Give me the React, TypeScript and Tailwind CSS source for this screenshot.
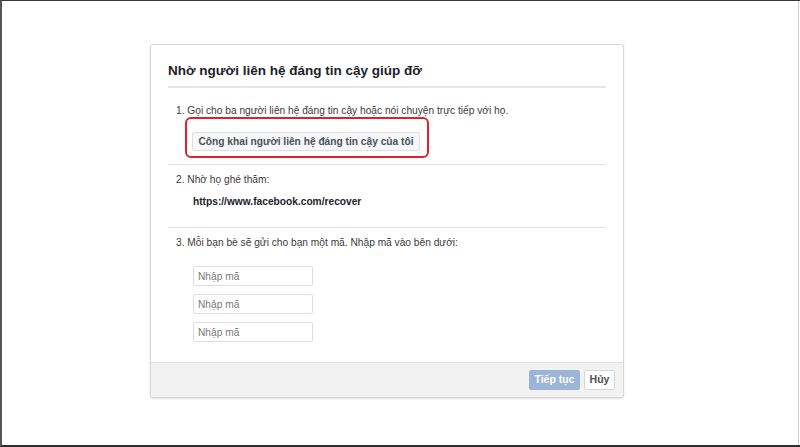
export default function App() {
  const font = { fontFamily: '"Liberation Sans", Arial, sans-serif' }
  return (
    <div
      className="w-[800px] h-[447px] bg-white border-t border-l-2 border-b-2 border-t-[#3a3a3a] border-l-[#555] border-b-[#2e2e2e] overflow-hidden"
      style={font}
    >
      <div className="w-[797px] h-full border-r border-r-[#cfcfcf] pt-[43px]">
        {/* Dialog */}
        <div className="ml-[148px] w-[474px] h-[354px] flex flex-col border border-[#d6d6d6] rounded-[3px] shadow-[0_1px_2px_rgba(0,0,0,0.12)] bg-white">
          <div className="flex-1 px-[17px]">
            <h2 className="pt-[17px] pb-[6px] text-[13.5px] leading-[18px] font-bold text-[#1d2129] border-b-2 border-[#e5e5e5]">
              Nhờ người liên hệ đáng tin cậy giúp đỡ
            </h2>

            {/* Step 1 */}
            <div className="pt-[16px] pb-[6px] border-b border-[#e5e5e5]">
              <p className="pl-[8px] text-[10.2px] leading-[14px] text-[#3b3b3b]">
                1. Gọi cho ba người liên hệ đáng tin cậy hoặc nói chuyện trực tiếp với họ.
              </p>
              <div className="ml-[17px] mt-[-1px] w-[244px] h-[41px] border-2 border-[#e3212b] rounded-[6px] pl-[5px] pt-[9px]">
                <button className="h-[19px] w-[228px] bg-[#f6f7f9] border border-[#dddfe2] rounded-[2px] text-[10.2px] font-bold text-[#4b4f56] leading-[17px]">
                  Công khai người liên hệ đáng tin cậy của tôi
                </button>
              </div>
            </div>

            {/* Step 2 */}
            <div className="pt-[8px] pb-[18px] border-b border-[#e5e5e5]">
              <p className="pl-[8px] text-[10.2px] leading-[14px] text-[#3b3b3b]">2. Nhờ họ ghé thăm:</p>
              <p className="pl-[25px] mt-[8px] text-[10.2px] leading-[14px] font-bold text-[#1d2129]">
                https://www.facebook.com/recover
              </p>
            </div>

            {/* Step 3 */}
            <div className="pt-[8px]">
              <p className="pl-[8px] text-[10.2px] leading-[14px] text-[#3b3b3b]">
                3. Mỗi bạn bè sẽ gửi cho bạn một mã. Nhập mã vào bên dưới:
              </p>
              <div className="mt-[16px] pl-[25px] flex flex-col gap-[8px]">
                {[0, 1, 2].map((i) => (
                  <input
                    key={i}
                    placeholder="Nhập mã"
                    className="w-[120px] h-[20px] border border-[#dddfe2] rounded-[2px] px-[4px] text-[10.2px] placeholder:text-[#7a7a7a] outline-none"
                    style={font}
                  />
                ))}
              </div>
            </div>
          </div>

          {/* Footer */}
          <div className="h-[35px] bg-[#f2f2f2] border-t border-[#e0e0e0] rounded-b-[3px] flex items-center justify-end gap-[4px] pr-[8px]">
            <button className="h-[20px] w-[51px] bg-[#9cb4d8] border border-[#9cb4d8] rounded-[2px] text-white text-[10.5px] font-bold">
              Tiếp tục
            </button>
            <button className="h-[20px] w-[31px] bg-white border border-[#d3d6db] rounded-[2px] text-[#4b4f56] text-[10.5px] font-bold">
              Hủy
            </button>
          </div>
        </div>
      </div>
    </div>
  )
}
